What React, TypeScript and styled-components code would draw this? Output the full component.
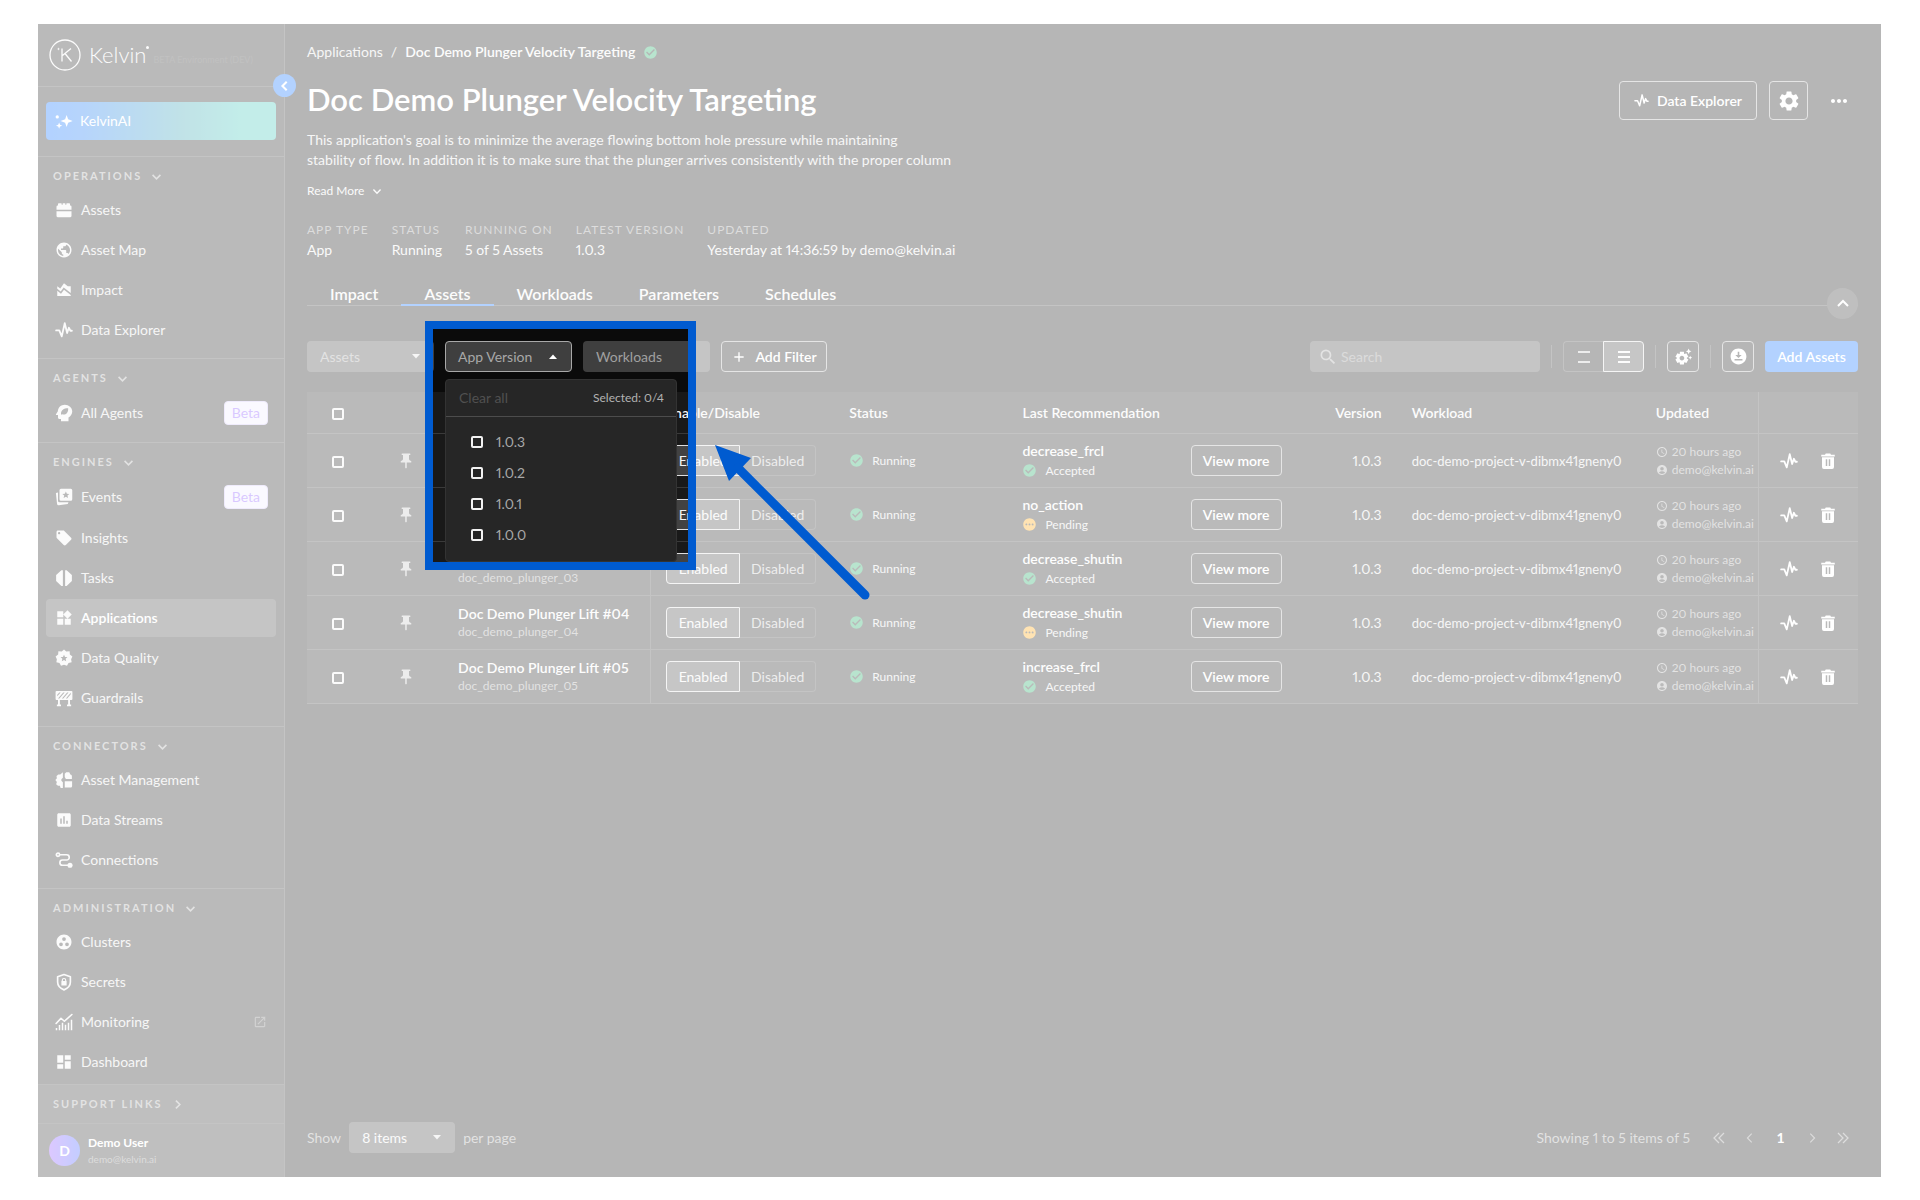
import React from "react";
import styled, { createGlobalStyle } from "styled-components";
import {
  MdPublic, MdAreaChart, MdLocalOffer, MdWidgets, MdPoll, MdGroupWork, MdDashboard, MdOpenInNew,
  MdPushPin, MdAccessTime, MdAccountCircle, MdSettings, MdSettingsSuggest, MdDownloadForOffline,
  MdMoreHoriz, MdSearch, MdCheckCircle, MdPending, MdAdd,
} from "react-icons/md";

const c = {
  page: "#0b0b0b",
  panel: "#191919",
  raised: "#2b2b2b",
  field: "#3f3f3f",
  line: "#3a3a3a",
  outline: "#a8a8a8",
  text: "#e2e2e2",
  muted: "#a0a0a0",
  faint: "#8c8c8c",
  blue: "#0069ff",
  mark: "#005bd0",
  green: "#12a35a",
  amber: "#ffa200",
};

const Global = createGlobalStyle`
  *, *::before, *::after { box-sizing: border-box; }
  body { margin: 0; background: #fff; overflow-x: hidden; font-variant-numeric: proportional-nums; }
  body, button, input, select { font-family: Lato, "Liberation Sans", sans-serif; font-size: 14px; line-height: 20px; }
  button { cursor: pointer; margin: 0; }
  svg { display: block; flex: none; }
`;

/* ---------- shell ---------- */
const Page = styled.div`
  min-height: 100vh;
  padding: 24px 39px 24px 38px;
  display: flex;
`;
const Shell = styled.div`
  flex: 1;
  min-width: 0;
  display: flex;
  background: ${c.page};
  color: ${c.text};
`;
const Sidebar = styled.aside`
  position: relative;
  flex: none;
  width: 247px;
  display: flex;
  flex-direction: column;
  background: ${c.panel};
  border-right: 1px solid ${c.line};
`;
const Brand = styled.div`
  height: 63px;
  padding: 0 11px;
  display: flex;
  align-items: center;
  border-bottom: 1px solid ${c.line};
`;
const Wordmark = styled.span`
  display: flex;
  margin-left: 8px;
  font-size: 22px;
  line-height: 28px;
  font-weight: 300;
  color: #f4f4f4;
  &::after {
    content: "";
    width: 3px;
    height: 3px;
    margin-top: 5px;
    border-radius: 50%;
    background: #f4f4f4;
  }
`;
const EnvNote = styled.span`
  margin: 10px 0 0 4px;
  font-size: 9px;
  line-height: 12px;
  white-space: nowrap;
  color: #303030;
`;
const CollapseButton = styled.button`
  position: absolute;
  right: -12px;
  top: 50px;
  width: 23px;
  height: 23px;
  padding: 0;
  display: grid;
  place-items: center;
  border: 0;
  border-radius: 50%;
  background: ${c.blue};
  color: #fff;
`;
const AiBlock = styled.div`
  padding: 15px 8px 16px;
  border-bottom: 1px solid ${c.line};
`;
const AiButton = styled.button`
  width: 100%;
  height: 38px;
  padding: 0 9px;
  display: flex;
  align-items: center;
  gap: 7px;
  border: 0;
  border-radius: 4px;
  background: linear-gradient(90deg, ${c.blue} 0%, #0b6ff4 15%, #2f9fae 60%, #36c3b6 85%);
  color: #fff;
`;
const NavSection = styled.section<{ $last?: boolean }>`
  padding: 0 8px ${(p) => (p.$last ? 3 : 9)}px;
  border-bottom: ${(p) => (p.$last ? "0" : `1px solid ${c.line}`)};
`;
const Caption = styled.button<{ $height: number; $top: number }>`
  width: 100%;
  height: ${(p) => p.$height}px;
  padding: ${(p) => p.$top}px 7px 0;
  display: flex;
  align-items: center;
  gap: 9px;
  border: 0;
  background: none;
  color: ${c.muted};
  font-size: 11px;
  line-height: 16px;
  font-weight: 700;
  letter-spacing: 2px;
  text-transform: uppercase;
`;
const NavList = styled.nav`
  display: flex;
  flex-direction: column;
  gap: 2px;
`;
const NavItem = styled.a<{ $active?: boolean; $tall?: boolean }>`
  height: ${(p) => (p.$tall ? 40 : 38)}px;
  padding: 0 8px 0 9px;
  display: flex;
  align-items: center;
  gap: 8px;
  border-radius: 4px;
  text-decoration: none;
  background: ${(p) => (p.$active ? c.field : "transparent")};
  color: ${(p) => (p.$active ? "#fff" : c.text)};
  font-weight: ${(p) => (p.$active ? 600 : 400)};
  svg { color: #f0f0f0; }
`;
const Beta = styled.span`
  margin-left: auto;
  height: 24px;
  padding: 0 7px;
  line-height: 22px;
  border: 1px solid #c9bcf5;
  border-radius: 4px;
  background: #efeaff;
  color: #8048ff;
`;
const External = styled.span`
  margin-left: auto;
  margin-right: 1px;
  svg { color: #6a6a6a; }
`;
const Support = styled.div`
  margin-top: auto;
  padding: 0 8px;
  background: ${c.raised};
  border-top: 1px solid ${c.line};
`;
const User = styled.div`
  height: 54px;
  padding: 0 11px;
  display: flex;
  align-items: center;
  gap: 8px;
  background: ${c.raised};
  border-top: 1px solid ${c.line};
`;
const Avatar = styled.span`
  width: 31px;
  height: 31px;
  display: grid;
  place-items: center;
  border-radius: 50%;
  background: linear-gradient(90deg, #8a48ff, #3758ff);
  color: #fff;
  font-size: 14px;
  font-weight: 700;
`;
const UserText = styled.div`
  font-size: 12px;
  line-height: 16px;
  font-weight: 700;
  color: #fff;
  small { display: block; font-size: 10px; font-weight: 400; color: ${c.faint}; }
`;

/* ---------- main ---------- */
const Main = styled.main`
  flex: 1;
  min-width: 0;
  padding: 18px 23px 24px 22px;
  display: flex;
  flex-direction: column;
`;
const Crumbs = styled.nav`
  display: flex;
  align-items: center;
  gap: 8px;
  a { color: ${c.text}; text-decoration: none; }
  b { font-weight: 600; color: #f4f4f4; }
`;
const TitleRow = styled.header`
  margin-top: 19px;
  display: flex;
  align-items: center;
  gap: 12px;
`;
const Title = styled.h1`
  flex: 1;
  margin: 0;
  padding-bottom: 3px;
  font-size: 31px;
  line-height: 36px;
  font-weight: 600;
  color: #fff;
`;
const OutlineButton = styled.button<{ $w?: number; $h: number }>`
  flex: none;
  width: ${(p) => (p.$w ? `${p.$w}px` : "auto")};
  height: ${(p) => p.$h}px;
  padding: 0;
  display: flex;
  align-items: center;
  justify-content: center;
  gap: 8px;
  border: 1px solid ${c.outline};
  border-radius: 4px;
  background: transparent;
  color: #fff;
  font-weight: 600;
`;
const PlainButton = styled.button<{ $size: number }>`
  width: ${(p) => p.$size}px;
  height: ${(p) => p.$size}px;
  padding: 0;
  display: grid;
  place-items: center;
  border: 0;
  background: none;
  color: #fff;
`;
const Description = styled.p`
  margin: 10px 0 0;
  max-width: 700px;
  white-space: pre-line;
`;
const ReadMore = styled.button`
  align-self: flex-start;
  margin-top: 13px;
  padding: 0;
  display: flex;
  align-items: center;
  gap: 8px;
  border: 0;
  background: none;
  color: #f0f0f0;
  font-size: 12px;
  line-height: 16px;
`;
const Facts = styled.dl`
  margin: 23px 0 0;
  display: flex;
  gap: 23px;
  dt { font-size: 12px; line-height: 16px; letter-spacing: 1px; text-transform: uppercase; color: ${c.faint}; }
  dd { margin: 2px 0 0; color: #ededed; }
`;
const Tabs = styled.nav`
  position: relative;
  margin-top: 24px;
  display: flex;
  box-shadow: inset 0 -1px 0 ${c.line};
`;
const Tab = styled.a<{ $active?: boolean }>`
  padding: 0 23px;
  border-bottom: 2px solid ${(p) => (p.$active ? c.blue : "transparent")};
  color: #f4f4f4;
  font-size: 16px;
  font-weight: 600;
  text-decoration: none;
`;
const FoldButton = styled.button`
  position: absolute;
  right: 0;
  top: 4px;
  width: 31px;
  height: 31px;
  padding: 0;
  display: grid;
  place-items: center;
  border: 0;
  border-radius: 50%;
  background: ${c.raised};
  color: #fff;
`;
const Toolbar = styled.div`
  margin-top: 35px;
  display: flex;
  align-items: center;
  gap: 11px;
`;
const Spacer = styled.div`flex: 1;`;
const Separator = styled.span`
  width: 1px;
  height: 23px;
  background: ${c.line};
`;
const SelectBox = styled.span<{ $w: number; $tone?: string }>`
  position: relative;
  width: ${(p) => p.$w}px;
  height: 31px;
  select {
    width: 100%;
    height: 31px;
    padding: 0 28px 0 13px;
    appearance: none;
    border: 0;
    border-radius: 4px;
    background: ${c.field};
    color: ${(p) => p.$tone || c.muted};
  }
  svg { position: absolute; right: 14px; top: 13px; pointer-events: none; color: #e0e0e0; }
`;
const FilterAnchor = styled.div`
  position: relative;
  width: 127px;
  height: 31px;
`;
const FilterButton = styled.button`
  width: 100%;
  height: 31px;
  padding: 0 14px 0 12px;
  display: flex;
  align-items: center;
  justify-content: space-between;
  border: 1px solid ${c.outline};
  border-radius: 4px;
  background: ${c.field};
  color: #a8a8a8;
  svg { color: #fff; }
`;
const Menu = styled.div`
  position: absolute;
  z-index: 2;
  left: 0;
  top: 38px;
  width: 232px;
  height: 183px;
  border: 1px solid #333;
  border-radius: 4px;
  background: #262626;
`;
const MenuHead = styled.div`
  height: 37px;
  padding: 0 12px 0 13px;
  display: flex;
  align-items: center;
  justify-content: space-between;
  border-bottom: 1px solid #4c4c4c;
  color: #b2b2b2;
  font-size: 12px;
  button { padding: 0; border: 0; background: none; color: #505050; }
`;
const MenuList = styled.div`
  padding: 9px 0 0 25px;
`;
const Option = styled.label`
  height: 31px;
  display: flex;
  align-items: center;
  gap: 13px;
  color: #a8a8a8;
`;
const Tick = styled.input.attrs({ type: "checkbox" })`
  appearance: none;
  width: 12px;
  height: 12px;
  margin: 0;
  border: 2px solid #f2f2f2;
  border-radius: 2px;
  vertical-align: middle;
  &:checked { background: ${c.blue}; }
`;
/* Highlights one region and washes out everything around it. */
const Spotlight = styled.div`
  position: absolute;
  z-index: 5;
  left: -20px;
  top: -20px;
  width: 271px;
  height: 249px;
  border: 8px solid ${c.mark};
  box-shadow: 0 0 0 3000px rgba(255, 255, 255, 0.7);
  pointer-events: none;
`;
const Arrow = styled.svg`
  position: absolute;
  left: 282px;
  top: 116px;
`;
const SearchBox = styled.label`
  width: 230px;
  height: 31px;
  padding: 0 8px;
  display: flex;
  align-items: center;
  gap: 3px;
  border-radius: 4px;
  background: ${c.field};
  color: ${c.muted};
  input { flex: 1; min-width: 0; padding: 0; border: 0; outline: 0; background: none; color: #fff; }
  input::placeholder { color: #878787; opacity: 1; }
`;
const Segment = styled.div`
  display: flex;
  height: 31px;
`;
const SegmentButton = styled.button<{ $on?: boolean; $w: number }>`
  width: ${(p) => p.$w}px;
  height: 31px;
  padding: 0;
  display: grid;
  place-items: center;
  border: 1px solid ${(p) => (p.$on ? "#dedede" : c.line)};
  background: ${(p) => (p.$on ? "#424242" : "transparent")};
  color: ${(p) => (p.$on ? "#f4f4f4" : "#c4c4c4")};
  &:first-child { border-radius: 4px 0 0 4px; ${(p) => (p.$on ? "" : "border-right: 0;")} }
  &:last-child { border-radius: 0 4px 4px 0; ${(p) => (p.$on ? "" : "border-left: 0;")} }
`;
const PrimaryButton = styled.button`
  width: 93px;
  height: 31px;
  padding: 0;
  border: 0;
  border-radius: 4px;
  background: ${c.blue};
  color: #fff;
  font-weight: 600;
`;
const Table = styled.table`
  margin-top: 20px;
  width: 100%;
  table-layout: fixed;
  border-collapse: separate;
  border-spacing: 0;
  background: ${c.panel};
  th, td {
    padding: 0 0 0 15px;
    text-align: left;
    border-bottom: 1px solid ${c.line};
    white-space: nowrap;
  }
  th { height: 42px; color: #f4f4f4; font-weight: 600; }
  td { height: 54px; }
`;
const Centered = styled.td`
  && { padding: 0; text-align: center; }
  svg { margin: 0 auto; color: #c0c0c0; }
`;
const NameCell = styled.td`
  && { padding-left: 16px; border-right: 1px solid ${c.line}; }
`;
const EndCell = styled.td`
  && { padding-right: 15px; text-align: right; }
`;
const StampCell = styled.td`
  && { border-right: 1px solid ${c.line}; }
`;
const CodeCell = styled.td`
  font-size: 13px;
`;
const Strong = styled.div`
  min-height: 18px;
  line-height: 18px;
  font-weight: 600;
  color: #f8f8f8;
`;
const Sub = styled.div`
  line-height: 18px;
  font-size: 12px;
  color: ${c.muted};
`;
const Stack = styled.div`
  display: flex;
  flex-direction: column;
  gap: 2px;
`;
const StatusLine = styled.div`
  display: flex;
  align-items: center;
  gap: 8px;
  font-size: 12px;
  line-height: 18px;
`;
const StampLine = styled.div`
  display: flex;
  align-items: center;
  gap: 4px;
  font-size: 12px;
  line-height: 18px;
  color: ${c.muted};
`;
const Actions = styled.div`
  display: flex;
  align-items: center;
  gap: 8px;
`;
const Footer = styled.footer`
  margin-top: auto;
  display: flex;
  align-items: center;
  gap: 8px;
  color: ${c.muted};
`;
const Pager = styled.nav`
  margin-left: auto;
  display: flex;
  align-items: center;
`;
const PageButton = styled.button<{ $on?: boolean }>`
  width: 31px;
  height: 31px;
  padding: 0;
  display: grid;
  place-items: center;
  border: 0;
  background: none;
  color: ${(p) => (p.$on ? "#fff" : c.faint)};
  font-weight: 700;
`;
const PagerLabel = styled.span`margin-right: 13px;`;

/* ---------- icons ---------- */
const dirs = { down: "M2 5l5 5 5-5", up: "M2 9l5-5 5 5", left: "M9 2L4 7l5 5", right: "M5 2l5 5-5 5" };
const Chevron = ({ dir, size = 12, w = 2 }: { dir: keyof typeof dirs; size?: number; w?: number }) => (
  <svg width={size} height={size} viewBox="0 0 14 14" fill="none" stroke="currentColor" strokeWidth={w}>
    <path d={dirs[dir]} />
  </svg>
);
const Doubled = ({ flip }: { flip?: boolean }) => (
  <svg width="14" height="14" viewBox="0 0 14 14" fill="none" stroke="currentColor" strokeWidth="1.3">
    <path d={flip ? "M2 2l5 5-5 5M7 2l5 5-5 5" : "M7 2L2 7l5 5M12 2L7 7l5 5"} />
  </svg>
);
const Caret = ({ up }: { up?: boolean }) => (
  <svg width="8" height="5" viewBox="0 0 8 5" fill="currentColor"><path d={up ? "M0 5l4-4.5L8 5z" : "M0 0h8L4 4.5z"} /></svg>
);
const Glyph = ({ children, size = 18 }: { children: React.ReactNode; size?: number }) => (
  <svg width={size} height={size} viewBox="0 0 24 24" fill="currentColor">{children}</svg>
);
const stroke = { fill: "none", stroke: "currentColor", strokeWidth: 2.2, strokeLinejoin: "round" as const, strokeLinecap: "round" as const };

const Pulse = ({ size = 18 }: { size?: number }) => (
  <Glyph size={size}><path {...stroke} strokeWidth={2.4} d="M1.5 12.5h4.2L9 20.500 13 3l3.200 13 2.300-7 2 4h2" /></Glyph>
);
const Sparkles = () => (
  <Glyph size={18}>
    <path d="M15.500 4l2 5.800 6 2.200-6 2.200-2 5.800-2-5.800-6-2.200 6-2.200zM5.500 14l1.200 3 3 1.200-3 1.200-1.200 3-1.200-3-3-1.200 3-1.200z" />
    <circle cx="3" cy="6.500" r="2.200" />
  </Glyph>
);
const Brick = () => <Glyph><path d="M2 11.500V7.500q0-1.500 1.500-1.500H4V4q0-1 1-1h3q1 0 1 1v1.200h1V4q0-1 1-1h2q1 0 1 1v1.200h1V4q0-1 1-1h3q1 0 1 1v2h.5Q22 6 22 7.500v4zM2 13.800h20V20q0 1.500-1.500 1.500h-17Q2 21.500 2 20z" /></Glyph>;
const Head = () => <Glyph><path fillRule="evenodd" d="M13 1C8 1 4 4.800 3.800 9.600L1.300 13.500c-.3.500 0 1 .6 1H4V18c0 1.200.8 2 2 2h2v3h10v-5c2.800-1.600 5-4.700 5-8 0-5-4.500-9-10-9zM8 13c0-5 3.500-7.500 9.500-7.500C18 11 15 14 11.500 14c-1 0-1.800-.3-2.300-.7L8 15z" /></Glyph>;
const CardsStar = () => <Glyph><path fillRule="evenodd" d="M8 1h13q2 0 2 2v12q0 2-2 2H8q-2 0-2-2V3q0-2 2-2zm6.500 3.500l-1.400 3.100-3.300.3 2.500 2.200-.8 3.300 3-1.800 2.900 1.800-.8-3.300 2.500-2.200-3.300-.3z" /><path d="M1.200 6.500L4 6v11q0 2 2 2h12l-1 2.300L5 23q-2 .2-2.300-2z" /></Glyph>;
const SplitOctagon = () => <Glyph><path d="M10.500 1.500v21H8.500L1.500 16V8l7-6.500zM13.500 1.500v21h2l7-6.500V8l-7-6.500z" /></Glyph>;
const SealStar = () => <Glyph><path fillRule="evenodd" d="M12 .8l3 2.400 4.500-.2.300 4.300 3.400 2.700-1.700 3.500.7 4.300-4.200.9-2 3.600-4-1.200-4 1.200-2-3.600-4.200-.9.700-4.300L.8 10l3.400-2.700L4.500 3l4.500.2zm0 6.700l-1.400 3-3.200.3 2.400 2.200-.7 3.300L12 14.600l2.900 1.700-.7-3.300 2.400-2.200-3.200-.3z" /></Glyph>;
const Barrier = () => (
  <Glyph>
    <path fillRule="evenodd" d="M2 2.500h20q1.200 0 1.200 1.200v9.600q0 1.200-1.200 1.200H2q-1.200 0-1.200-1.200V3.700q0-1.200 1.200-1.200zM3 9.500L7.500 4.500H5.800L3 7.500zM4 12.500h1.800l7-8H11zM9.200 12.500H11l7-8h-1.800zM14.500 12.500h1.800L21 7V5z" />
    <path d="M4 14h2.500v6.500H8V23H2.500v-2.500H4zM17.500 14H20v6.500h1.500V23H16v-2.500h1.500z" />
  </Glyph>
);
const PuzzleBlocks = () => <Glyph><path d="M10.500 1.500V9L8.500 11v2l2 2v7.500h-3l-1-3H4l-2.500-2 1-2.800-2-2.700 2-2.500L2 6.500l2.500-2H7zM13 8V3.500l2-2h4l1.500 3q2 .5 2 2V10.500h-8zM13 13.500h9.800V20q0 2-2 2H13z" /></Glyph>;
const PathNodes = () => <Glyph><circle {...stroke} cx="4" cy="5" r="2.200" /><circle cx="20" cy="19" r="3.400" /><path {...stroke} d="M7 5h8.500a3.500 3.500 0 010 7H10a3.500 3.500 0 000 7h8" /></Glyph>;
const ShieldLock = () => <Glyph><path {...stroke} d="M12 2l8.500 3v7c0 5-3.500 8.500-8.500 10.500C7 20.500 3.500 17 3.500 12V5z" /><path fillRule="evenodd" d="M8.500 10.500h.5V9.500a3 3 0 016 0v1h.5V16.500h-7zm2 0h3V9.500a1.500 1.500 0 00-3 0z" /></Glyph>;
const Trend = () => <Glyph><path {...stroke} d="M1.500 14L8 7l4.500 4L22.500 2" /><path d="M1 20h2v3H1zM5 16h2v7H5zM9 13h2v10H9zM13 15.500h2V23h-2zM17 13h2v10h-2zM21 9h2v14h-2z" /></Glyph>;
const Bin = () => <Glyph><path fillRule="evenodd" d="M9 2h6l1 1.500h5V6H3V3.500h5zM4 7h16v13q0 2.500-2.500 2.500h-11Q4 22.500 4 20zm5 2.500v9h2v-9zm4 0v9h2v-9z" /></Glyph>;
const LogoMark = () => (
  <svg width="32" height="32" viewBox="0 0 32 32" fill="none" stroke="#f4f4f4" strokeWidth="1.300">
    <circle cx="16" cy="16" r="15" />
    <path d="M13 9.500v13M22 9.500l-8.500 7M16 14.500l6.500 8" />
    <circle cx="9.500" cy="10" r=".7" fill="#f4f4f4" strokeWidth=".6" />
  </svg>
);
const Rows = ({ lines }: { lines: number[] }) => (
  <svg width="12" height="14" viewBox="0 0 12 14" fill="currentColor">
    {lines.map((y) => <rect key={y} x="0" y={y} width="12" height="2" />)}
  </svg>
);

/* ---------- data ---------- */
type Item = { label: string; icon: React.ReactNode; beta?: boolean; active?: boolean; external?: boolean };
const sections: { title: string; items: Item[] }[] = [
  { title: "Operations", items: [
    { label: "Assets", icon: <Brick /> },
    { label: "Asset Map", icon: <MdPublic size={18} /> },
    { label: "Impact", icon: <MdAreaChart size={18} /> },
    { label: "Data Explorer", icon: <Pulse /> },
  ] },
  { title: "Agents", items: [{ label: "All Agents", icon: <Head />, beta: true }] },
  { title: "Engines", items: [
    { label: "Events", icon: <CardsStar />, beta: true },
    { label: "Insights", icon: <MdLocalOffer size={18} /> },
    { label: "Tasks", icon: <SplitOctagon /> },
    { label: "Applications", icon: <MdWidgets size={18} />, active: true },
    { label: "Data Quality", icon: <SealStar /> },
    { label: "Guardrails", icon: <Barrier /> },
  ] },
  { title: "Connectors", items: [
    { label: "Asset Management", icon: <PuzzleBlocks /> },
    { label: "Data Streams", icon: <MdPoll size={18} /> },
    { label: "Connections", icon: <PathNodes /> },
  ] },
  { title: "Administration", items: [
    { label: "Clusters", icon: <MdGroupWork size={18} /> },
    { label: "Secrets", icon: <ShieldLock /> },
    { label: "Monitoring", icon: <Trend />, external: true },
    { label: "Dashboard", icon: <MdDashboard size={18} /> },
  ] },
];
const facts = [
  ["App Type", "App"], ["Status", "Running"], ["Running On", "5 of 5 Assets"],
  ["Latest Version", "1.0.3"], ["Updated", "Yesterday at 14:36:59 by demo@kelvin.ai"],
];
const rows: { n: string; name?: string; id?: string; rec: string; ok: boolean }[] = [
  { n: "01", rec: "decrease_frcl", ok: true },
  { n: "02", rec: "no_action", ok: false },
  { n: "03", id: "doc_demo_plunger_03", rec: "decrease_shutin", ok: true },
  { n: "04", name: "Doc Demo Plunger Lift #04", id: "doc_demo_plunger_04", rec: "decrease_shutin", ok: false },
  { n: "05", name: "Doc Demo Plunger Lift #05", id: "doc_demo_plunger_05", rec: "increase_frcl", ok: true },
];
const columns = [62, 73, 209, 183, 173, 168, 122, 99, 244, 118, 99];

const FilterSelect = ({ label }: { label: string }) => (
  <SelectBox $w={127}>
    <select aria-label={label}><option>{label}</option></select>
    <Caret />
  </SelectBox>
);

const SideNav = () => (
  <Sidebar>
    <Brand>
      <LogoMark />
      <Wordmark>Kelvin</Wordmark>
      <EnvNote>BETA Environment (DEV)</EnvNote>
    </Brand>
    <CollapseButton aria-label="Collapse sidebar"><Chevron dir="left" size={12} w={2.4} /></CollapseButton>
    <AiBlock><AiButton><Sparkles />KelvinAI</AiButton></AiBlock>
    {sections.map((s, i) => (
      <NavSection key={s.title} $last={i === sections.length - 1}>
        <Caption $height={34} $top={4}>{s.title}<Chevron dir="down" size={11} /></Caption>
        <NavList aria-label={s.title}>
          {s.items.map((it) => (
            <NavItem key={it.label} href="#" $active={it.active} $tall={it.beta}>
              {it.icon}
              {it.label}
              {it.beta && <Beta>Beta</Beta>}
              {it.external && <External><MdOpenInNew size={14} /></External>}
            </NavItem>
          ))}
        </NavList>
      </NavSection>
    ))}
    <Support><Caption $height={38} $top={0}>Support Links<Chevron dir="right" size={11} /></Caption></Support>
    <User>
      <Avatar>D</Avatar>
      <UserText>Demo User<small>demo@kelvin.ai</small></UserText>
    </User>
  </Sidebar>
);

const VersionFilter = () => (
  <FilterAnchor>
    <FilterButton aria-haspopup="listbox" aria-expanded="true">App Version<Caret up /></FilterButton>
    <Menu>
      <MenuHead><button>Clear all</button><span>Selected: 0/4</span></MenuHead>
      <MenuList>
        {["1.0.3", "1.0.2", "1.0.1", "1.0.0"].map((v) => (
          <Option key={v}><Tick />{v}</Option>
        ))}
      </MenuList>
    </Menu>
    <Spotlight>
      <Arrow width="160" height="160" viewBox="0 0 160 160" fill={c.mark}>
        <path d="M0 0L36 13 14 36z" />
        <path d="M23 23L150 150" stroke={c.mark} strokeWidth="9" strokeLinecap="round" />
      </Arrow>
    </Spotlight>
  </FilterAnchor>
);

const AssetTable = () => (
  <Table>
    <colgroup>{columns.map((w, i) => <col key={i} style={{ width: w }} />)}</colgroup>
    <thead>
      <tr>
        <Centered as="th"><Tick aria-label="Select all assets" /></Centered>
        <th />
        <NameCell as="th" aria-label="Name" />
        <th>Enable/Disable</th>
        <th>Status</th>
        <th>Last Recommendation</th>
        <th />
        <EndCell as="th">Version</EndCell>
        <th>Workload</th>
        <StampCell as="th">Updated</StampCell>
        <th />
      </tr>
    </thead>
    <tbody>
      {rows.map((r) => (
        <tr key={r.n}>
          <Centered><Tick aria-label={`Select asset ${r.n}`} /></Centered>
          <Centered><MdPushPin size={18} /></Centered>
          <NameCell>
            <Strong>{r.name}</Strong>
            <Sub>{r.id}</Sub>
          </NameCell>
          <td>
            <Segment>
              <SegmentButton $on $w={74} aria-pressed="true">Enabled</SegmentButton>
              <SegmentButton $w={76} aria-pressed="false">Disabled</SegmentButton>
            </Segment>
          </td>
          <td><StatusLine><MdCheckCircle size={15} color={c.green} />Running</StatusLine></td>
          <td>
            <Stack>
              <Strong>{r.rec}</Strong>
              <StatusLine>
                {r.ok ? <MdCheckCircle size={15} color={c.green} /> : <MdPending size={15} color={c.amber} />}
                {r.ok ? "Accepted" : "Pending"}
              </StatusLine>
            </Stack>
          </td>
          <td><OutlineButton $w={91} $h={31}>View more</OutlineButton></td>
          <EndCell>1.0.3</EndCell>
          <CodeCell>doc-demo-project-v-dibmx41gneny0</CodeCell>
          <StampCell>
            <StampLine><MdAccessTime size={12} />20 hours ago</StampLine>
            <StampLine><MdAccountCircle size={12} />demo@kelvin.ai</StampLine>
          </StampCell>
          <td>
            <Actions>
              <PlainButton $size={31} aria-label="Open in Data Explorer"><Pulse size={18} /></PlainButton>
              <PlainButton $size={31} aria-label="Delete"><Bin /></PlainButton>
            </Actions>
          </td>
        </tr>
      ))}
    </tbody>
  </Table>
);

export default function App() {
  return (
    <Page>
      <Global />
      <Shell>
        <SideNav />
        <Main>
          <Crumbs aria-label="Breadcrumb">
            <a href="#">Applications</a><span>/</span><b>Doc Demo Plunger Velocity Targeting</b>
            <MdCheckCircle size={15} color={c.green} />
          </Crumbs>
          <TitleRow>
            <Title>Doc Demo Plunger Velocity Targeting</Title>
            <OutlineButton $w={138} $h={39}><Pulse size={15} />Data Explorer</OutlineButton>
            <OutlineButton $w={39} $h={39} aria-label="Settings"><MdSettings size={24} /></OutlineButton>
            <PlainButton $size={38} aria-label="More"><MdMoreHoriz size={24} /></PlainButton>
          </TitleRow>
          <Description>
            {"This application's goal is to minimize the average flowing bottom hole pressure while maintaining\nstability of flow. In addition it is to make sure that the plunger arrives consistently with the proper column"}
          </Description>
          <ReadMore>Read More<Chevron dir="down" size={10} /></ReadMore>
          <Facts>
            {facts.map(([k, v]) => <div key={k}><dt>{k}</dt><dd>{v}</dd></div>)}
          </Facts>
          <Tabs aria-label="Sections">
            {["Impact", "Assets", "Workloads", "Parameters", "Schedules"].map((t) => (
              <Tab key={t} href="#" $active={t === "Assets"}>{t}</Tab>
            ))}
            <FoldButton aria-label="Fold header"><Chevron dir="up" size={14} /></FoldButton>
          </Tabs>
          <Toolbar>
            <FilterSelect label="Assets" />
            <VersionFilter />
            <FilterSelect label="Workloads" />
            <OutlineButton $w={106} $h={31}><MdAdd size={16} />Add Filter</OutlineButton>
            <Spacer />
            <SearchBox><MdSearch size={20} /><input aria-label="Search" placeholder="Search" /></SearchBox>
            <Separator />
            <Segment>
              <SegmentButton $w={40} aria-label="Comfortable rows"><Rows lines={[1, 11]} /></SegmentButton>
              <SegmentButton $on $w={41} aria-label="Compact rows"><Rows lines={[1, 6, 11]} /></SegmentButton>
            </Segment>
            <Separator />
            <OutlineButton $w={32} $h={31} aria-label="Table settings"><MdSettingsSuggest size={19} /></OutlineButton>
            <Separator />
            <OutlineButton $w={32} $h={31} aria-label="Download"><MdDownloadForOffline size={19} /></OutlineButton>
            <PrimaryButton>Add Assets</PrimaryButton>
          </Toolbar>
          <AssetTable />
          <Footer>
            <span>Show</span>
            <SelectBox $w={106} $tone="#f0f0f0">
              <select aria-label="Items per page"><option>8 items</option></select>
              <Caret />
            </SelectBox>
            <span>per page</span>
            <Pager aria-label="Pagination">
              <PagerLabel>Showing 1 to 5 items of 5</PagerLabel>
              <PageButton aria-label="First page"><Doubled /></PageButton>
              <PageButton aria-label="Previous page"><Chevron dir="left" w={1.3} /></PageButton>
              <PageButton $on>1</PageButton>
              <PageButton aria-label="Next page"><Chevron dir="right" w={1.3} /></PageButton>
              <PageButton aria-label="Last page"><Doubled flip /></PageButton>
            </Pager>
          </Footer>
        </Main>
      </Shell>
    </Page>
  );
}
